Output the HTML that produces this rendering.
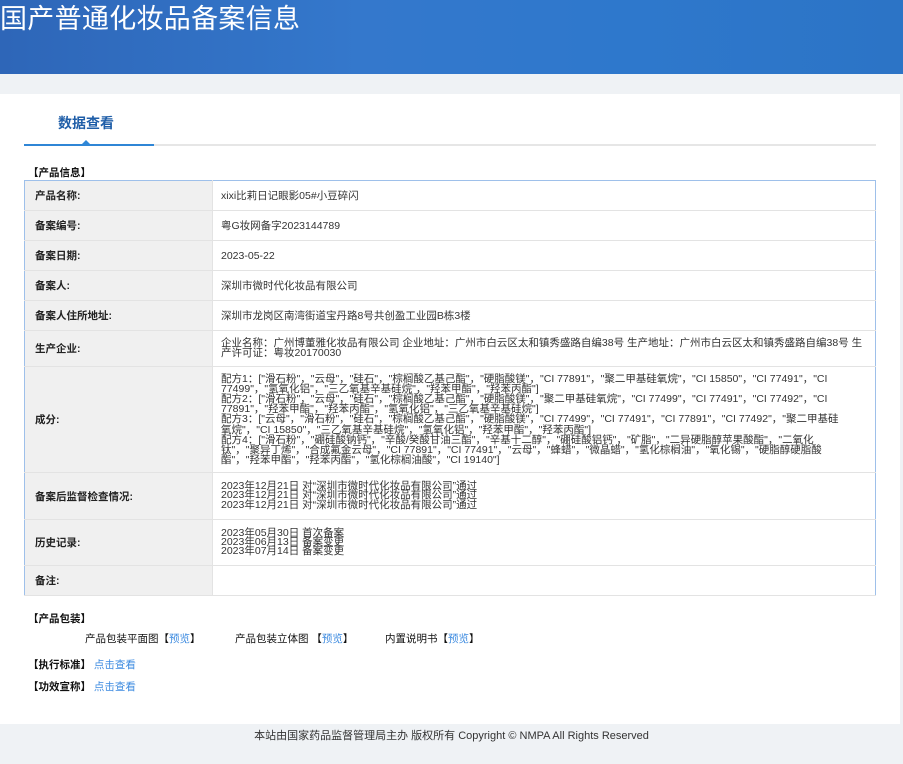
<!DOCTYPE html>
<html><head><meta charset="utf-8"><style>
*{margin:0;padding:0;box-sizing:border-box}
body{width:903px;height:764px;overflow:hidden;background:#eff2f5;font-family:"Liberation Sans","Noto Sans CJK SC",sans-serif;color:#333;position:relative}
.hdr{position:absolute;left:0;top:0;width:903px;height:74px;background:linear-gradient(90deg,#2e66b8 0%,#3478cc 40%,#2e78cc 70%,#2c74c6 100%)}
.hdr h1{position:absolute;left:0;top:2px;font-size:27px;font-weight:normal;color:#fff;line-height:34px;letter-spacing:0.3px;white-space:nowrap}
.panel{position:absolute;left:0;top:94px;width:900px;height:630px;background:#fff}
.tab{position:absolute;left:58px;top:114px;font-size:14px;font-weight:bold;color:#1f5ea8;line-height:18px}
.tl1{position:absolute;left:24px;top:144px;width:130px;height:2px;background:#2f86d6}
.tl2{position:absolute;left:154px;top:144px;width:722px;height:2px;background:#e6e6e6}
.tri{position:absolute;left:81px;top:140px;width:0;height:0;border-left:5px solid transparent;border-right:5px solid transparent;border-bottom:5px solid #2f86d6}
.sec{position:absolute;left:28px;font-size:10.5px;font-weight:bold;color:#111;line-height:14px;white-space:nowrap}
table{position:absolute;left:24px;top:180px;width:852px;border-collapse:collapse;border:1.5px solid #9ec0ea}
td{border-bottom:1px solid #e3e3e3;font-size:10.5px;vertical-align:middle;white-space:nowrap}
td.l{width:188px;background:#f0f0f0;font-weight:bold;color:#222;padding-left:10px;border-right:1px solid #e3e3e3}
td.v{padding-left:8px;color:#333}
.m{line-height:9.2px}
.ing{line-height:10.2px}
a{color:#3d8be0;text-decoration:none}
.foot{position:absolute;left:0;top:729px;width:903px;text-align:center;font-size:11px;color:#333;line-height:14px}
</style></head><body>
<div class="hdr"><h1>国产普通化妆品备案信息</h1></div>
<div class="panel"></div>
<div class="tab">数据查看</div>
<div class="tl1"></div><div class="tl2"></div><div class="tri"></div>
<div class="sec" style="top:166px">【产品信息】</div>
<table>
<tr style="height:30px"><td class="l">产品名称:</td><td class="v">xixi比莉日记眼影05#小豆碎闪</td></tr>
<tr style="height:30px"><td class="l">备案编号:</td><td class="v">粤G妆网备字2023144789</td></tr>
<tr style="height:30px"><td class="l">备案日期:</td><td class="v">2023-05-22</td></tr>
<tr style="height:30px"><td class="l">备案人:</td><td class="v">深圳市微时代化妆品有限公司</td></tr>
<tr style="height:30px"><td class="l">备案人住所地址:</td><td class="v">深圳市龙岗区南湾街道宝丹路8号共创盈工业园B栋3楼</td></tr>
<tr style="height:36px"><td class="l">生产企业:</td><td class="v m">企业名称：广州博董雅化妆品有限公司 企业地址：广州市白云区太和镇秀盛路自编38号 生产地址：广州市白云区太和镇秀盛路自编38号 生<br>产许可证：粤妆20170030</td></tr>
<tr style="height:106px"><td class="l">成分:</td><td class="v ing">配方1：["滑石粉"，"云母"，"硅石"，"棕榈酸乙基己酯"，"硬脂酸镁"，"CI 77891"，"聚二甲基硅氧烷"，"CI 15850"，"CI 77491"，"CI<br>77499"，"氢氧化铝"，"三乙氧基辛基硅烷"，"羟苯甲酯"，"羟苯丙酯"]<br>配方2：["滑石粉"，"云母"，"硅石"，"棕榈酸乙基己酯"，"硬脂酸镁"，"聚二甲基硅氧烷"，"CI 77499"，"CI 77491"，"CI 77492"，"CI<br>77891"，"羟苯甲酯"，"羟苯丙酯"，"氢氧化铝"，"三乙氧基辛基硅烷"]<br>配方3：["云母"，"滑石粉"，"硅石"，"棕榈酸乙基己酯"，"硬脂酸镁"，"CI 77499"，"CI 77491"，"CI 77891"，"CI 77492"，"聚二甲基硅<br>氧烷"，"CI 15850"，"三乙氧基辛基硅烷"，"氢氧化铝"，"羟苯甲酯"，"羟苯丙酯"]<br>配方4：["滑石粉"，"硼硅酸钠钙"，"辛酸/癸酸甘油三酯"，"辛基十二醇"，"硼硅酸铝钙"，"矿脂"，"二异硬脂醇苹果酸酯"，"二氧化<br>钛"，"聚异丁烯"，"合成氟金云母"，"CI 77891"，"CI 77491"，"云母"，"蜂蜡"，"微晶蜡"，"氢化棕榈油"，"氧化锡"，"硬脂醇硬脂酸<br>酯"，"羟苯甲酯"，"羟苯丙酯"，"氢化棕榈油酸"，"CI 19140"]</td></tr>
<tr style="height:47px"><td class="l">备案后监督检查情况:</td><td class="v m">2023年12月21日 对“深圳市微时代化妆品有限公司”通过<br>2023年12月21日 对“深圳市微时代化妆品有限公司”通过<br>2023年12月21日 对“深圳市微时代化妆品有限公司”通过</td></tr>
<tr style="height:46px"><td class="l">历史记录:</td><td class="v m">2023年05月30日 首次备案<br>2023年06月13日 备案变更<br>2023年07月14日 备案变更</td></tr>
<tr style="height:30px"><td class="l">备注:</td><td class="v"></td></tr>
</table>
<div class="sec" style="top:612px">【产品包装】</div>
<div class="sec" style="top:632px;left:85px;font-weight:normal">产品包装平面图【<a>预览</a>】</div>
<div class="sec" style="top:632px;left:235px;font-weight:normal">产品包装立体图 【<a>预览</a>】</div>
<div class="sec" style="top:632px;left:385px;font-weight:normal">内置说明书【<a>预览</a>】</div>
<div class="sec" style="top:658px">【执行标准】 <a style="font-weight:normal">点击查看</a></div>
<div class="sec" style="top:680px">【功效宣称】 <a style="font-weight:normal">点击查看</a></div>
<div class="foot">本站由国家药品监督管理局主办 版权所有 Copyright © NMPA All Rights Reserved</div>
</body></html>
